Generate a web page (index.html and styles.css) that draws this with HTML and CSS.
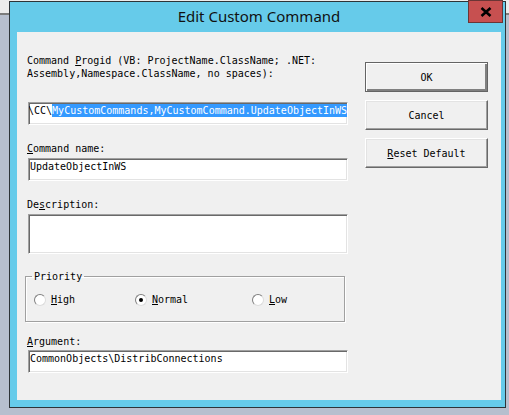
FILE: index.html
```html
<!DOCTYPE html>
<html lang="en">
<head>
  <meta charset="UTF-8">
  <title>Edit Custom Command</title>
  <link rel="stylesheet" href="styles.css">
</head>
<body>
  <div class="desktop">
    <div class="back-strip"></div>

    <div class="dialog">
      <div class="titlebar">
        <span class="title">Edit Custom Command</span>
        <button class="close-btn" title="Close">
          <svg width="12" height="10" viewBox="0 0 12 10">
            <path d="M1.5 1 L10.5 9 M10.5 1 L1.5 9" stroke="#000" stroke-width="2.6" fill="none"/>
          </svg>
        </button>
      </div>

      <div class="client">
        <div class="form-col">
          <div class="label">Command <u>P</u>rogid (VB: ProjectName.ClassName; .NET:<br>Assembly,Namespace.ClassName, no spaces):</div>
          <div class="field field-progid"><span class="scrolled">\CC\<span class="selected">MyCustomCommands,MyCustomCommand.UpdateObjectInWS</span></span></div>

          <div class="label label-gap"><u>C</u>ommand name:</div>
          <div class="field">UpdateObjectInWS</div>

          <div class="label label-gap">De<u>s</u>cription:</div>
          <div class="field field-tall"></div>

          <fieldset class="group">
            <legend>Priority</legend>
            <div class="radio-row">
              <label class="radio"><span class="radio-dot"></span><span><u>H</u>igh</span></label>
              <label class="radio"><span class="radio-dot checked"></span><span><u>N</u>ormal</span></label>
              <label class="radio"><span class="radio-dot"></span><span><u>L</u>ow</span></label>
            </div>
          </fieldset>

          <div class="label label-arg"><u>A</u>rgument:</div>
          <div class="field">CommonObjects\DistribConnections</div>
        </div>

        <div class="btn-col">
          <button class="btn btn-default">OK</button>
          <button class="btn">Cancel</button>
          <button class="btn"><u>R</u>eset Default</button>
        </div>
      </div>
    </div>
  </div>
</body>
</html>
```

FILE: styles.css
```css
* {
  box-sizing: border-box;
}

body {
  margin: 0;
  background: #b7bfce;
}

.desktop {
  position: relative;
  width: 509px;
  height: 415px;
  overflow: hidden;
}

/* edge of the window behind the dialog */
.back-strip {
  height: 15px;
  background: #ececec;
  border-bottom: 2px solid #7c7c7c;
}

.dialog {
  position: absolute;
  left: 9px;
  top: 1px;
  width: 497px;
  height: 407px;
  display: flex;
  flex-direction: column;
  background: #66cbea;
  border: 1px solid #2e3438;
  padding: 0 4px 7px 7px;
}

.titlebar {
  height: 30px;
  display: flex;
  align-items: center;
  justify-content: center;
}

.title {
  font-family: "Noto Sans", sans-serif;
  font-size: 15px;
  color: #111;
  padding-bottom: 2px;
}

.close-btn {
  position: absolute;
  left: 458px;
  top: -2px;
  width: 35px;
  height: 23px;
  padding: 0;
  display: flex;
  align-items: center;
  justify-content: center;
  background: #c75050;
  border: 1px solid #6b3535;
}

.client {
  flex: 1;
  display: flex;
  gap: 17px;
  padding: 22px 0 0 8px;
  background: #f0f0f0;
  font-family: "DejaVu Sans Mono", "Liberation Mono", monospace;
  font-size: 10px;
  line-height: 13px;
  color: #000;
}

.form-col {
  width: 323px;
}

.label {
  margin-left: 2px;
  white-space: nowrap;
}

.label-gap {
  margin-top: 17px;
  margin-bottom: 3px;
}

.label-arg {
  margin-top: 13px;
  margin-bottom: 2px;
}

.field {
  width: 320px;
  height: 23px;
  margin-left: 3px;
  padding: 1px 2px 0 1px;
  background: #fff;
  border: 1px solid;
  border-color: #a0a0a0 #fff #fff #a0a0a0;
  box-shadow: inset 1px 1px #696969, inset -1px -1px #e3e3e3;
  white-space: nowrap;
  overflow: hidden;
}

.field-progid {
  margin-top: 22px;
}

.field-tall {
  height: 40px;
}

.scrolled {
  display: inline-block;
  margin-left: -2px;
}

.selected {
  display: inline-block;
  background: #3399ff;
  color: #fff;
}

.group {
  margin: 16px 0 0 0;
  width: 320px;
  padding: 0 0 15px 0;
  border: 1px solid #a0a0a0;
  box-shadow: 1px 1px #fff, inset 1px 1px #fff;
}

.group legend {
  margin-left: 6px;
  padding: 0 2px;
}

.radio-row {
  display: grid;
  grid-template-columns: 101px 117px auto;
  margin-top: 10px;
  padding-left: 8px;
}

.radio {
  display: flex;
  align-items: center;
  gap: 5px;
}

.radio-dot {
  width: 12px;
  height: 12px;
  border-radius: 50%;
  background: #fff;
  border: 1px solid;
  border-color: #7f7f7f #dcdcdc #dcdcdc #7f7f7f;
  display: flex;
  align-items: center;
  justify-content: center;
}

.radio-dot.checked::after {
  content: "";
  width: 4px;
  height: 4px;
  border-radius: 50%;
  background: #000;
}

.btn-col {
  width: 123px;
  padding-top: 8px;
  display: flex;
  flex-direction: column;
  gap: 8px;
}

.btn {
  height: 30px;
  padding: 0;
  font: inherit;
  color: #000;
  background: #f0f0f0;
  border: 1px solid;
  border-color: #fff #696969 #696969 #fff;
  box-shadow: inset -1px -1px #a0a0a0, inset 1px 1px #e3e3e3;
}

.btn-default {
  border-color: #646464;
  box-shadow: inset 1px 1px #fff, inset -2px -2px #808080;
}
```
